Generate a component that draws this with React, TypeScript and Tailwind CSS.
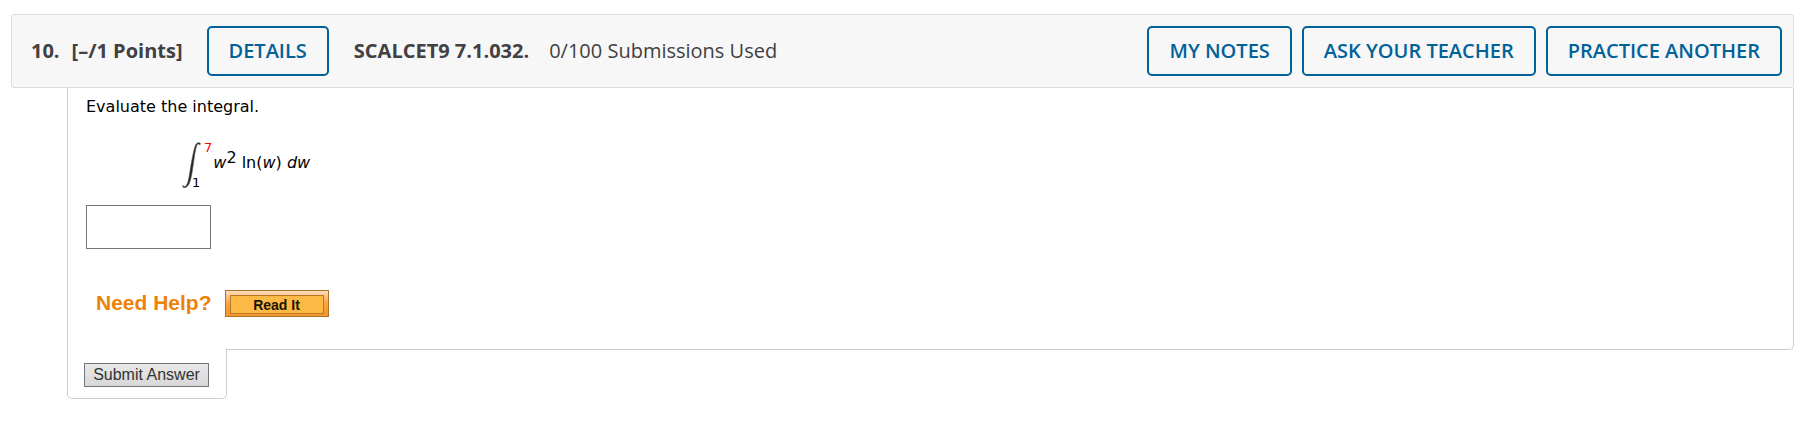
import type { ReactNode } from "react";

function HeaderButton({ children }: { children: ReactNode }) {
  return (
    <button
      type="button"
      className="h-[50px] shrink-0 rounded-[5px] border-2 border-[#006298] px-5 text-[20px] leading-none font-semibold whitespace-nowrap text-[#006298]"
    >
      {children}
    </button>
  );
}

function QuestionHeader() {
  return (
    <header className="flex items-center justify-between rounded-[3px] border border-[#dcdcdc] bg-[#f7f7f7] py-[11px] pr-[11px] pl-[19px] font-['Open_Sans',sans-serif] text-[20px] whitespace-nowrap text-[#414042]">
      <div className="flex items-center">
        <h2 className="flex gap-3 font-bold">
          <span>10.</span>
          <span>[–/1 Points]</span>
        </h2>
        <div className="mr-[25px] ml-6 flex">
          <HeaderButton>DETAILS</HeaderButton>
        </div>
        <strong className="font-bold">SCALCET9 7.1.032.</strong>
        <span className="ml-5">0/100 Submissions Used</span>
      </div>
      <div className="flex gap-[10px]">
        <HeaderButton>MY NOTES</HeaderButton>
        <HeaderButton>ASK YOUR TEACHER</HeaderButton>
        <HeaderButton>PRACTICE ANOTHER</HeaderButton>
      </div>
    </header>
  );
}

function Integral() {
  return (
    <div className="mt-[23px] ml-[96px] flex h-[47px] items-start">
      <svg width="19" height="46" viewBox="0 0 19 46" className="shrink-0" aria-hidden="true">
        <path
          d="M18.4 1.6C17.6 .2 15 .1 13.5 3.2C11.8 7 9.4 20 8 29C6.8 37 5.6 43.6 3.2 44.4C2.2 44.7 1.3 44.4 .8 43.4C.2 45.6 2.3 46 3.8 45.4C7.5 44 9 37 10.4 28.5C11.8 19.5 13.2 7 14.8 3.6C15.8 1.5 17.2 1.8 18 2.9Z"
          fill="#222"
          stroke="#555"
          strokeWidth=".6"
        />
      </svg>
      <div className="-ml-[9px] flex h-[47px] flex-col justify-between text-[13px] leading-[12px]">
        <span className="pl-[12px] text-[#ff0000]">7</span>
        <span>1</span>
      </div>
      <p className="mt-[9px] ml-px leading-6 whitespace-nowrap">
        <i>w</i>
        <sup className="relative -top-[5px] align-baseline text-[16px] leading-none">2</sup> ln(<i>w</i>) <i>dw</i>
      </p>
    </div>
  );
}

export default function App() {
  return (
    <main className="bg-white pt-[14px] pr-[15px] pb-9 pl-[11px] font-['DejaVu_Sans',sans-serif] text-[16px] text-black">
      <QuestionHeader />
      <div className="ml-[56px]">
        <section className="rounded-br-[5px] border-x border-b border-[#ccc] pt-[7px] pb-8 pl-[18px]">
          <p className="leading-6">Evaluate the integral.</p>
          <Integral />
          <input
            type="text"
            aria-label="Answer"
            className="mt-[16px] block h-[44px] w-[125px] border border-[#767676] bg-white px-2"
          />
          <div className="mt-[41px] flex items-center pl-[10px] font-['Liberation_Sans',sans-serif] font-bold">
            <span className="pb-[2px] text-[21px] leading-[25px] text-[#ee8208]">Need Help?</span>
            <button
              type="button"
              className="ml-[13px] h-[27px] w-[104px] border border-[#a9732a] bg-linear-to-b from-[#fddcb8] via-[#f9a13e] to-[#f7962c] p-1 text-[14px] text-[#1c1304]"
            >
              <span className="flex h-[19px] items-center justify-center border border-[#b87a25] bg-[#fdb945] leading-none">
                Read It
              </span>
            </button>
          </div>
        </section>
        <div className="relative -mt-[2px] w-[160px] rounded-b-[5px] border-x border-b border-[#ccc] bg-white pt-[15px] pb-[11px] pl-[16px]">
          <button
            type="submit"
            className="block h-[24px] w-[125px] border border-[#767676] bg-linear-to-b from-[#e8e8e8] to-[#d8d8d8] font-['Liberation_Sans',sans-serif] text-[16px] leading-none whitespace-nowrap text-[#333]"
          >
            Submit Answer
          </button>
        </div>
      </div>
    </main>
  );
}
